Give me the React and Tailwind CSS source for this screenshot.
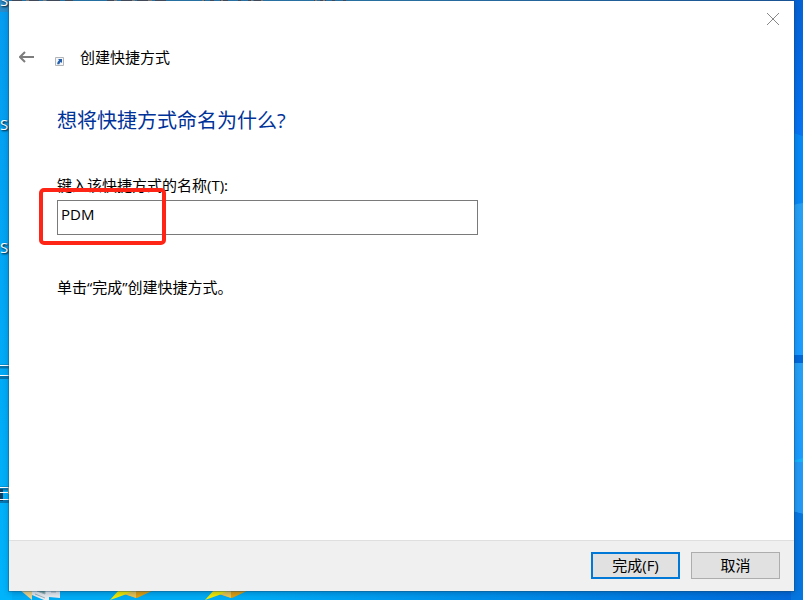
import { useState } from "react";

const labels = [
  { text: "S", className: "-top-2" },
  { text: "S", className: "top-[116px]" },
  { text: "S", className: "top-[239px]" },
];

function Wallpaper() {
  return (
    <>
      <div className="absolute inset-0 bg-linear-to-r from-[#00adf6] from-30% to-[#0568da]" />
      <div className="absolute inset-y-0 left-0 w-3 bg-linear-to-b from-[#059cf0] to-[#00b4fb]" />
      <div className="absolute inset-x-0 top-0 h-3 bg-linear-to-r from-[#2a8cc8] via-[#338bc4] to-[#1c5cae]" />
      <svg
        className="absolute top-0 right-0 h-[600px] w-3"
        viewBox="0 0 12 600"
        preserveAspectRatio="none"
        aria-hidden="true"
      >
        <defs>
          <linearGradient id="beamTop" x1="0" y1="0" x2="0" y2="1">
            <stop offset="0" stopColor="#0562d4" />
            <stop offset="1" stopColor="#0674f4" />
          </linearGradient>
          <linearGradient id="beamLow" x1="0" y1="0" x2="0" y2="1">
            <stop offset="0" stopColor="#26a0f4" />
            <stop offset="1" stopColor="#1a9cff" />
          </linearGradient>
        </defs>
        <path d="M0 0h12v136L0 132z" fill="url(#beamTop)" />
        <path d="M0 132l12 4v68H0z" fill="#0688f5" />
        <path d="M0 205l12-2v152H0z" fill="url(#beamLow)" />
        <path d="M0 355h12v8H0z" fill="#0069d9" />
        <path d="M0 363h12v99H0z" fill="url(#beamLow)" />
        <path d="M0 461l12-3v4H0z" fill="#14b2fb" />
        <path d="M0 462h12v52L0 511z" fill="#2399f5" />
        <path d="M0 511l12 3v86H0z" fill="#0676df" />
      </svg>
      <svg className="absolute top-0 left-0 h-[2px] w-[360px]" viewBox="0 0 360 2" aria-hidden="true">
        <path
          d="M12 .5h10m5 0h12m8 0h13m5 0h8m34 0h9m5 0h12m4 0h12m6 0h11m36 0h3m5 0h4m6 0h8m10 0h3m7 0h4m2 0h8m52 0h3m3 0h6m6 0h3m8 0h3"
          stroke="#5b4d50"
        />
        <path d="M26 .5h3m14 0h3m68 0h3m15 0h3m13 0h4m50 0h2m17 0h2m28 0h2m8 0h2m52 0h2m6 0h2" stroke="#b99a82" />
      </svg>
      {labels.map((item) => (
        <span
          key={item.className}
          className={`absolute left-0 text-[15px] leading-4 font-medium text-white [text-shadow:1px_1px_2px_#000] ${item.className}`}
        >
          {item.text}
        </span>
      ))}
      <svg className="absolute top-[360px] left-0 h-[145px] w-[9px]" viewBox="0 0 9 145" aria-hidden="true">
        <path d="M0 6.5h9M0 17h9M0 128.5h9M0 141h9" stroke="#0876ae" strokeWidth="4" />
        <path d="M0 129h3v12H0z" fill="#123f5e" />
        <path d="M0 5.5h9M0 15.5h9M0 127.5h9M0 132.5h9M0 139.5h9" stroke="#fff" />
        <path d="M8.5 128v6" stroke="#c7b66e" />
      </svg>
      <svg className="absolute bottom-0 left-0 h-[10px] w-[260px]" viewBox="0 0 260 10" aria-hidden="true">
        <path d="M20 0h12v10z" fill="#f3d58a" />
        <path d="M32 0h28v8l-11-1v3h-5l-12-5z" fill="#e8edf0" />
        <path d="M37 1l8 3V0M51 2h5M35 4l10 4" fill="#6da493" stroke="#9fb5bb" />
        <path d="M122 0h32l-17 8-13-4z" fill="#e3a00c" />
        <path d="M122 0h14v8l-12-4z" fill="#e9c653" />
        <path d="M119 0h16l-11 5-14 5z" fill="#f5ed00" />
        <path d="M217 0h32l-17 8-13-4z" fill="#e3a00c" />
        <path d="M217 0h14v8l-12-4z" fill="#e9c653" />
        <path d="M214 0h16l-11 5-14 5z" fill="#f5ed00" />
      </svg>
    </>
  );
}

function ShortcutIcon() {
  return (
    <svg className="mt-2 h-[9px] w-[9px]" viewBox="0 0 9 9" aria-hidden="true">
      <path d="M.5.5h8v8h-8z" fill="#f4f6f8" stroke="#b3b6b9" />
      <path d="M3 2h4v4L5.800 4.900C4.900 5.500 4.500 6.200 4.400 7.300H2.200C2.200 5.500 2.900 4.400 4.200 3.300z" fill="#2560ad" />
    </svg>
  );
}

export default function App() {
  const [name, setName] = useState("PDM");

  return (
    <div className="relative isolate flex min-h-screen flex-col overflow-hidden px-[9px] pt-px pb-[9px] font-['Open_Sans','Noto_Sans_CJK_SC',sans-serif] text-[15px] leading-5 text-black">
      <div className="absolute inset-0 -z-10 overflow-hidden">
        <Wallpaper />
      </div>

      <section
        role="dialog"
        aria-labelledby="wizard-title"
        className="flex grow flex-col bg-white shadow-[0_0_0_1px_rgba(30,75,110,0.35),0_2px_6px_rgba(0,30,70,0.3)]"
      >
        <div className="flex h-9 justify-end pr-[14px]">
          <button type="button" aria-label="关闭" className="flex h-9 w-[14px] items-center justify-center text-[#888]">
            <svg className="h-3 w-3" viewBox="0 0 12 12" fill="none" stroke="currentColor" aria-hidden="true">
              <path d="M0 0l12 12M12 0L0 12" />
            </svg>
          </button>
        </div>

        <header className="flex h-10 items-center pl-[10px]">
          <button type="button" aria-label="返回" className="flex h-6 w-4 items-center text-[#7d7d7d]">
            <svg className="h-3 w-4" viewBox="0 0 16 12" fill="none" stroke="currentColor" strokeWidth="2" aria-hidden="true">
              <path d="M15 6H1.500M6 1L1 6l5 5" />
            </svg>
          </button>
          <div className="ml-5 flex items-center gap-4">
            <ShortcutIcon />
            <h1 id="wizard-title">创建快捷方式</h1>
          </div>
        </header>

        <main className="grow px-12 pt-[29px]">
          <h2 className="text-[20px] leading-[30px] text-[#003399]">想将快捷方式命名为什么?</h2>

          <div className="mt-[39px] flex max-w-[421px] flex-col gap-[5px]">
            <label htmlFor="shortcut-name">键入该快捷方式的名称(T):</label>
            <div className="relative">
              <input
                id="shortcut-name"
                type="text"
                value={name}
                onChange={(e) => setName(e.target.value)}
                className="block h-[35px] w-full border border-[#7a7a7a] bg-white px-[3px] pb-2 outline-none"
              />
              <div className="pointer-events-none absolute -top-3 -left-[18px] h-[57px] w-[127px] rounded-[5px] border-4 border-[#ff2516]" />
            </div>
          </div>

          <p className="mt-[42px]">单击“完成”创建快捷方式。</p>
        </main>

        <footer className="flex justify-end gap-[11px] border-t border-[#dfdfdf] bg-[#f0f0f0] pt-[11px] pr-[14px] pb-3">
          <button type="button" className="h-[27px] w-[89px] border-2 border-[#0078d7] bg-[#e1e1e1] pb-[2px]">
            完成(F)
          </button>
          <button type="button" className="h-[27px] w-[89px] border border-[#adadad] bg-[#e1e1e1] pb-[2px]">
            取消
          </button>
        </footer>
      </section>
    </div>
  );
}
